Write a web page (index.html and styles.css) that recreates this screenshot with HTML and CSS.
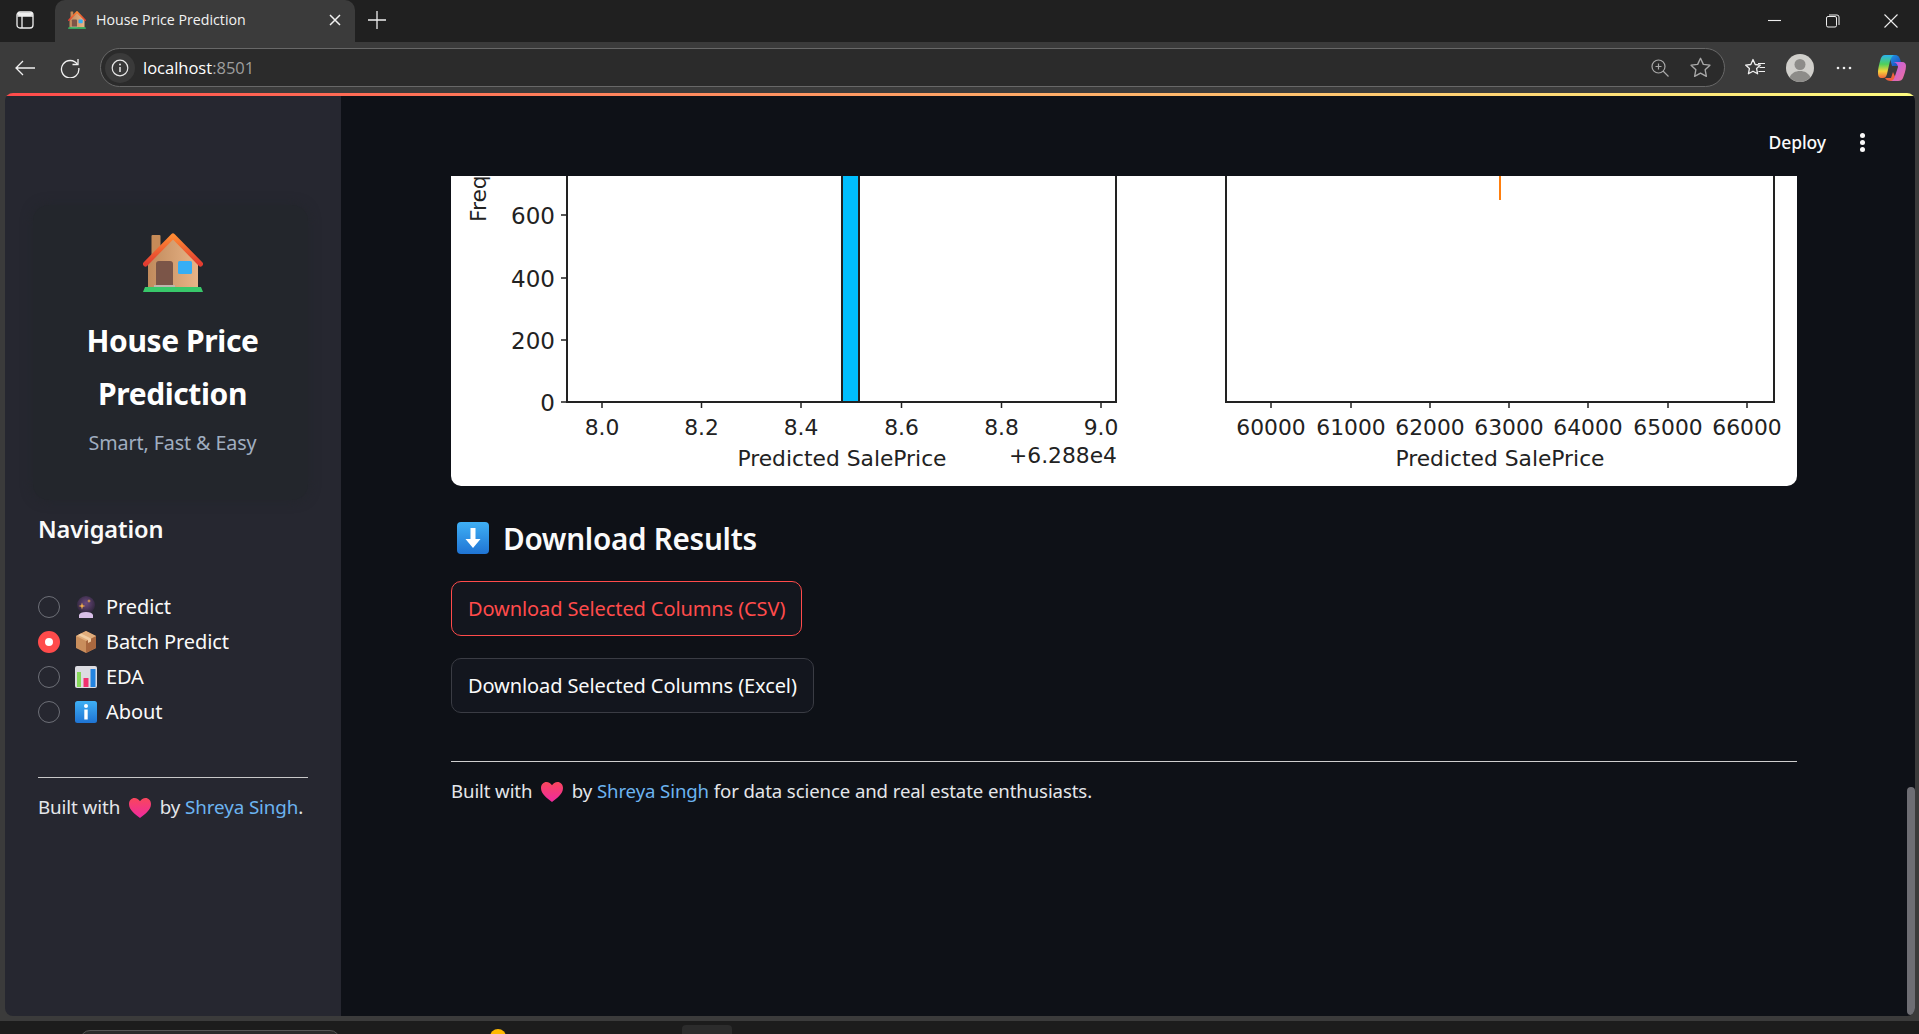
FILE: index.html
```html
<!DOCTYPE html>
<html lang="en">
<head>
<meta charset="utf-8">
<title>House Price Prediction</title>
<link rel="stylesheet" href="styles.css">
</head>
<body>
<svg class="defs" aria-hidden="true">
  <defs>
    <linearGradient id="roof" x1="0" y1="0" x2="0" y2="1"><stop offset="0" stop-color="#ff8a33"/><stop offset="1" stop-color="#e23b30"/></linearGradient>
    <linearGradient id="wall" x1="0" y1="0" x2="1" y2="0"><stop offset="0" stop-color="#c08a5c"/><stop offset="1" stop-color="#e8b487"/></linearGradient>
    <linearGradient id="blue" x1="0" y1="0" x2="0" y2="1"><stop offset="0" stop-color="#3fb0f5"/><stop offset="1" stop-color="#1f74d4"/></linearGradient>
    <linearGradient id="heart" x1="0" y1="0" x2="0" y2="1"><stop offset="0" stop-color="#f8465c"/><stop offset="1" stop-color="#f02aa0"/></linearGradient>
    <radialGradient id="ball" cx=".5" cy=".4" r=".6"><stop offset="0" stop-color="#6b4a80"/><stop offset="1" stop-color="#2d2438"/></radialGradient>
    <linearGradient id="co1" x1="0" y1="0" x2="1" y2="1"><stop offset="0" stop-color="#1f9be8"/><stop offset="1" stop-color="#1c3fb8"/></linearGradient>
    <linearGradient id="co2" x1="0" y1="0" x2="0" y2="1"><stop offset="0" stop-color="#2bb3ee"/><stop offset=".4" stop-color="#4fd05a"/><stop offset=".7" stop-color="#f6d43a"/><stop offset="1" stop-color="#f2673a"/></linearGradient>
    <linearGradient id="co3" x1="0" y1="0" x2="1" y2="1"><stop offset="0" stop-color="#b85cf0"/><stop offset="1" stop-color="#f0709a"/></linearGradient>
    <symbol id="house" viewBox="0 0 60 60">
      <rect x="8.500" y="2" width="9" height="22" rx="1" fill="#c68b58"/>
      <path d="M5 29 30 5l25 24v25H5z" fill="url(#wall)"/>
      <path d="M13 53V31q0-3 3-3h11q3 0 3 3v22z" fill="#7b5548"/>
      <rect x="35" y="28" width="14" height="13" rx="1.500" fill="#35aef5"/>
      <rect x="11" y="52" width="21" height="3" fill="#bdb5ad"/>
      <path d="M2.500 31 30 3l27.500 28" fill="none" stroke="url(#roof)" stroke-width="5" stroke-linecap="round" stroke-linejoin="round"/>
      <path d="M2 54h56l2 5H0z" fill="#38c86a"/>
    </symbol>
    <symbol id="heart-e" viewBox="0 0 22 20">
      <path d="M11 20C6 16 0 12 0 6c0-3.500 2.500-6 5.500-6C7.800 0 9.800 1.300 11 3.300 12.200 1.300 14.200 0 16.500 0 19.500 0 22 2.500 22 6c0 6-6 10-11 14z" fill="url(#heart)"/>
    </symbol>
  </defs>
</svg>

<div class="tabstrip">
  <svg class="i-panel" viewBox="0 0 18 18"><rect x="1" y="1" width="16" height="16" rx="3" fill="none" stroke="#f0f0f0" stroke-width="1.300"/><path d="M1.500 5h15.500M6 5v12" fill="none" stroke="#f0f0f0" stroke-width="1.300"/><rect x="1.500" y="1.500" width="15" height="3.500" rx="2" fill="#f0f0f0"/></svg>
  <div class="tab">
    <svg class="tab-icon"><use href="#house"/></svg>
    <span class="tab-title">House Price Prediction</span>
    <svg class="tab-close" viewBox="0 0 12 12"><path d="M1 1l10 10M11 1 1 11" stroke="#f2f2f2" stroke-width="1.500"/></svg>
  </div>
  <svg class="i-plus" viewBox="0 0 18 18"><path d="M9 0v18M0 9h18" stroke="#eee" stroke-width="1.300"/></svg>
  <div class="window-controls">
    <svg class="i-win" viewBox="0 0 14 14"><path d="M0 6.500h13" stroke="#eee" stroke-width="1.100"/></svg>
    <svg class="i-win" viewBox="0 0 14 14"><rect x=".5" y="2.500" width="10" height="10.500" rx="1.500" fill="none" stroke="#eee"/><path d="M3 1h8q2 0 2 2v8" fill="none" stroke="#eee"/></svg>
    <svg class="i-win" viewBox="0 0 14 14"><path d="M.5.500l13 13M13.500.500l-13 13" stroke="#eee" stroke-width="1.100"/></svg>
  </div>
</div>

<div class="toolbar">
  <svg class="i-back" viewBox="0 0 20 16"><path d="M20 8H1M8 1 1 8l7 7" fill="none" stroke="#f0f0f0" stroke-width="1.300"/></svg>
  <svg class="i-reload" viewBox="0 0 20 20"><path d="M17.500 6.500A8.700 8.700 0 1 0 18.800 10" fill="none" stroke="#f0f0f0" stroke-width="1.300"/><path d="M18 1v5.500h-5.500" fill="none" stroke="#f0f0f0" stroke-width="1.300"/></svg>
  <div class="address">
    <span class="chip"><svg class="i-info" viewBox="0 0 18 18"><circle cx="9" cy="9" r="7.800" fill="none" stroke="#e8e8e8" stroke-width="1.200"/><path d="M9 8v5" stroke="#e8e8e8" stroke-width="1.500"/><circle cx="9" cy="5.500" r="1" fill="#e8e8e8"/></svg></span>
    <span class="url">localhost<span class="url-port">:8501</span></span>
    <svg class="i-zoom" viewBox="0 0 18 18"><circle cx="7.500" cy="7.500" r="6.500" fill="none" stroke="#a8a8a8" stroke-width="1.200"/><path d="M12 12l5.500 5.500M4.500 7.500h6M7.500 4.500v6" stroke="#a8a8a8" stroke-width="1.200"/></svg>
    <svg class="i-star" viewBox="0 0 20 20"><path d="M10 1.200l2.700 5.800 6.300.8-4.600 4.300 1.200 6.300-5.600-3.100-5.600 3.100 1.200-6.300L1 7.800l6.300-.8z" fill="none" stroke="#a8a8a8" stroke-width="1.300" stroke-linejoin="round"/></svg>
  </div>
  <svg class="i-favs" viewBox="0 0 20 20"><path d="M8 1.500l2.200 5 5.200.6-3.800 3.500 1 5.200L8 13.200l-4.600 2.600 1-5.200L.6 7.100l5.200-.6z" fill="none" stroke="#f0f0f0" stroke-width="1.300" stroke-linejoin="round"/><path d="M13 5.500h7M14.500 9.500h5.500M13.500 13.500h6.500" stroke="#f0f0f0" stroke-width="1.200"/></svg>
  <svg class="i-avatar" viewBox="0 0 28 28"><circle cx="14" cy="14" r="14" fill="#d0cfcb"/><circle cx="14" cy="10.500" r="5.500" fill="#8d8c89"/><path d="M3.600 23.300C5.500 19 9.500 17 14 17s8.500 2 10.400 6.300A14 14 0 0 1 3.600 23.300z" fill="#8d8c89"/></svg>
  <svg class="i-more" viewBox="0 0 16 4"><circle cx="2" cy="2" r="1.300" fill="#eee"/><circle cx="8" cy="2" r="1.300" fill="#eee"/><circle cx="14" cy="2" r="1.300" fill="#eee"/></svg>
  <svg class="i-copilot" viewBox="0 0 28 28"><path d="M11 1h6c3 0 4 2 5 4l2 7h-10z" fill="url(#co1)"/><path d="M7 1h9c-2 1-3 3-4 6L9 20c-1 3-2 4-4 4H4c-3 0-4-2-4-5 0-5 2-12 3-15 1-2 2-3 4-3z" fill="url(#co2)"/><path d="M7 24h6l2-6 4 9h-6c-3 0-5-1-6-3z" fill="#f0603c"/><path d="M15 8h9c3 0 4 2 4 4 0 4-2 9-3 12-1 2-2 3-5 3h-8c3 0 4-2 5-5l3-9c0-2-2-5-5-5z" fill="url(#co3)"/></svg>
</div>

<div class="viewport">
  <div class="progress"></div>
  <div class="app">
    <aside class="sidebar">
      <div class="brand">
        <svg class="brand-icon"><use href="#house"/></svg>
        <h1 class="brand-title">House Price Prediction</h1>
        <p class="brand-sub">Smart, Fast &amp; Easy</p>
      </div>
      <h2 class="nav-title">Navigation</h2>
      <ul class="nav">
        <li class="nav-item"><span class="radio"></span>
          <svg class="emoji" viewBox="0 0 22 22"><circle cx="11" cy="9" r="9" fill="url(#ball)"/><path d="M4 19q1-3 7-3t7 3v3H4z" fill="#d9bfe8"/><path d="M7 6.500l.8 2.700 2.700.8-2.700.8L7 13.500l-.8-2.700L3.500 10l2.700-.8zM14 3l.5 1.500L16 5l-1.500.5L14 7l-.5-1.500L12 5l1.500-.5z" fill="#f7b14a"/></svg>
          <span>Predict</span></li>
        <li class="nav-item"><span class="radio radio-on"></span>
          <svg class="emoji" viewBox="0 0 22 22"><path d="M11 0l10 5v12l-10 5-10-5V5z" fill="#c98e5c"/><path d="M11 10 21 5v12l-10 5z" fill="#a9683f"/><path d="M1 5l10-5 10 5-10 5z" fill="#e0ad7c"/><path d="M6 2.500l10 5v3l-3 1.500v-3L3 4z" fill="#f0cda4"/></svg>
          <span>Batch Predict</span></li>
        <li class="nav-item"><span class="radio"></span>
          <svg class="emoji" viewBox="0 0 22 22"><rect width="22" height="22" rx="2" fill="#dcdce2"/><rect x="2" y="6" width="4" height="15" fill="#86d85a"/><rect x="8.500" y="12" width="5" height="9" fill="#f0306e"/><rect x="15.500" y="3" width="5" height="18" fill="#2484e0"/></svg>
          <span>EDA</span></li>
        <li class="nav-item"><span class="radio"></span>
          <svg class="emoji" viewBox="0 0 22 22"><rect width="22" height="22" rx="2.500" fill="url(#blue)"/><circle cx="11" cy="5" r="2" fill="#fff"/><rect x="9.300" y="8.500" width="3.400" height="10" fill="#fff"/></svg>
          <span>About</span></li>
      </ul>
      <hr class="side-rule">
      <p class="credit">Built with <svg class="heart"><use href="#heart-e"/></svg> by <a class="link" href="#">Shreya Singh</a>.</p>
    </aside>

    <main class="main">
      <header class="main-header">
        <span class="deploy">Deploy</span>
        <svg class="kebab" viewBox="0 0 7 21"><circle cx="3.500" cy="3.500" r="2.500" fill="#fafafa"/><circle cx="3.500" cy="10.500" r="2.500" fill="#fafafa"/><circle cx="3.500" cy="17.500" r="2.500" fill="#fafafa"/></svg>
      </header>
      <div class="content">
        <div class="chart-card">
          <svg class="chart" width="1346" height="310" viewBox="0 0 1346 310">
            <text class="ct" transform="translate(35 46) rotate(-90)" text-anchor="start">Frequency</text>
            <rect x="391" y="-20" width="17" height="246" fill="#00bfff" stroke="#222" stroke-width="2"/>
            <path class="ax" d="M116-10V226H665V-10"/>
            <path class="tk" d="M110 39h6M110 102h6M110 164h6M110 226h6M151 226v6M250.500 226v6M350 226v6M450.500 226v6M550.500 226v6M650 226v6"/>
            <text class="ct ct-y" x="104" y="48" text-anchor="end">600</text>
            <text class="ct ct-y" x="104" y="111" text-anchor="end">400</text>
            <text class="ct ct-y" x="104" y="173" text-anchor="end">200</text>
            <text class="ct ct-y" x="104" y="235" text-anchor="end">0</text>
            <text class="ct" x="151" y="259" text-anchor="middle">8.0</text>
            <text class="ct" x="250.500" y="259" text-anchor="middle">8.2</text>
            <text class="ct" x="350" y="259" text-anchor="middle">8.4</text>
            <text class="ct" x="450.500" y="259" text-anchor="middle">8.6</text>
            <text class="ct" x="550.500" y="259" text-anchor="middle">8.8</text>
            <text class="ct" x="650" y="259" text-anchor="middle">9.0</text>
            <text class="ct" x="391" y="290" text-anchor="middle">Predicted SalePrice</text>
            <text class="ct" x="666" y="287" text-anchor="end">+6.288e4</text>
            <path class="ax" d="M775-10V226H1323V-10"/>
            <path class="orange" d="M1049 0v24"/>
            <path class="tk" d="M820 226v6M900 226v6M979 226v6M1058 226v6M1137 226v6M1217 226v6M1296 226v6"/>
            <text class="ct" x="820" y="259" text-anchor="middle">60000</text>
            <text class="ct" x="900" y="259" text-anchor="middle">61000</text>
            <text class="ct" x="979" y="259" text-anchor="middle">62000</text>
            <text class="ct" x="1058" y="259" text-anchor="middle">63000</text>
            <text class="ct" x="1137" y="259" text-anchor="middle">64000</text>
            <text class="ct" x="1217" y="259" text-anchor="middle">65000</text>
            <text class="ct" x="1296" y="259" text-anchor="middle">66000</text>
            <text class="ct" x="1049" y="290" text-anchor="middle">Predicted SalePrice</text>
          </svg>
        </div>
        <h3 class="section-title">
          <svg class="section-emoji" viewBox="0 0 32 32"><rect width="32" height="32" rx="4" fill="url(#blue)"/><path d="M13.500 6h5v11h5L16 26 8.500 17h5z" fill="#fff"/></svg>
          <span>Download Results</span>
        </h3>
        <button class="btn btn-active" type="button">Download Selected Columns (CSV)</button>
        <button class="btn" type="button">Download Selected Columns (Excel)</button>
        <hr class="main-rule">
        <p class="footer-text">Built with <svg class="heart"><use href="#heart-e"/></svg> by <a class="link" href="#">Shreya Singh</a> for data science and real estate enthusiasts.</p>
      </div>
      <div class="scroll-thumb"></div>
    </main>
  </div>
</div>

<div class="taskbar">
  <span class="tb-pill"></span>
  <span class="tb-sun"></span>
  <span class="tb-box"></span>
</div>
</body>
</html>
```
FILE: styles.css
```css
* { box-sizing: border-box; }
html, body { margin: 0; height: 100%; overflow: hidden; }
body { background: #3b3b3b; font-family: "Noto Sans", sans-serif; color: #fafafa; display: flex; flex-direction: column; width: 1919px; height: 1034px; }
.defs { width: 0; height: 0; display: block; flex: none; }
svg { display: block; flex: none; }

/* browser chrome */
.tabstrip { height: 42px; flex: none; background: #202020; display: flex; align-items: center; padding-left: 16px; }
.i-panel { width: 18px; height: 18px; margin-right: 21px; margin-bottom: 2px; }
.tab { width: 300px; height: 42px; background: #3b3b3b; border-radius: 10px 10px 0 0; display: flex; align-items: center; padding: 0 0 2px 13px; }
.tab-icon { width: 18px; height: 18px; margin-right: 10px; }
.tab-title { font-family: "Open Sans", sans-serif; font-size: 14.200px; color: #f2f2f2; flex: 1; white-space: nowrap; margin-bottom: 2px; }
.tab-close { width: 12px; height: 12px; margin-right: 14px; }
.i-plus { width: 18px; height: 18px; margin: 0 0 2px 13px; }
.window-controls { margin-left: auto; display: flex; gap: 44px; padding: 0 21px 1px 0; }
.i-win { width: 14px; height: 14px; }

.toolbar { height: 51px; flex: none; background: #3b3b3b; display: flex; align-items: center; padding-left: 15px; }
.i-back { width: 20px; height: 16px; margin-right: 25px; }
.i-reload { width: 20px; height: 20px; margin-right: 20px; }
.address { width: 1625px; height: 39px; border: 1px solid #686868; border-radius: 20px; background: #2b2b2b; display: flex; align-items: center; padding-left: 4px; padding-right: 13px; }
.chip { width: 30px; height: 30px; border-radius: 50%; background: #3a3a3a; display: flex; align-items: center; justify-content: center; margin-right: 8px; }
.i-info { width: 18px; height: 18px; }
.url { font-family: "Open Sans", sans-serif; font-size: 16.500px; color: #fff; }
.url-port { color: #9e9e9e; }
.i-zoom { width: 18px; height: 18px; margin-left: auto; margin-right: 21px; }
.i-star { width: 21px; height: 21px; }
.i-favs { width: 20px; height: 20px; margin-left: 20px; }
.i-avatar { width: 28px; height: 28px; margin-left: 21px; }
.i-more { width: 16px; height: 4px; margin-left: 22px; }
.i-copilot { width: 28px; height: 28px; margin-left: 26px; }

/* page */
.viewport { flex: none; height: 923px; width: 1910px; margin-left: 5px; display: flex; flex-direction: column; border-radius: 8px; overflow: hidden; }
.progress { height: 3px; flex: none; background: linear-gradient(90deg, #ff4b4b, #fffd80); }
.app { flex: 1; display: flex; min-height: 0; }
.sidebar { width: 336px; flex: none; background: #262730; padding: 109px 33px 0 28px; }
.brand { height: 295px; background: #23262c; border-radius: 16px; display: flex; flex-direction: column; align-items: center; padding: 28px 0 0 4px; box-shadow: 0 0 12px #23262c; }
.brand-icon { width: 60px; height: 60px; }
.brand-title { font-size: 30px; line-height: 53px; font-weight: 700; margin: 21px 0 0; width: 190px; text-align: center; color: #fff; letter-spacing: -.4px; }
.brand-sub { font-size: 19.700px; line-height: 26px; margin: 10px 0 0; color: #a0aec0; letter-spacing: -.1px; white-space: nowrap; }
.nav-title { font-size: 23.600px; font-weight: 600; margin: 12px 0 0 5px; line-height: 34px; letter-spacing: -.1px; }
.nav { list-style: none; margin: 43px 0 0 5px; padding: 0; }
.nav-item { height: 35px; display: flex; align-items: center; font-size: 20px; letter-spacing: -.1px; }
.radio { width: 22px; height: 22px; border-radius: 50%; border: 1.500px solid #6d6f77; margin-right: 15px; flex: none; }
.radio-on { background: #fff; border: 7px solid #ff4b4b; }
.emoji { width: 22px; height: 22px; margin-right: 9px; }
.side-rule { border: 0; border-top: 1px solid #c8c8c8; margin: 48px 0 0 5px; }
.credit { font-size: 18.800px; line-height: 26px; margin: 16px 0 0 5px; color: #e4e6ea; white-space: nowrap; letter-spacing: -.1px; }
.heart { display: inline-block; width: 22px; height: 20px; vertical-align: -4px; margin: 0 4px; }
.link { color: #6cb4f0; text-decoration: none; }

.main { flex: 1; background: #0e1117; padding: 0 118px 0 110px; display: flex; flex-direction: column; position: relative; min-width: 0; }
.main-header { height: 80px; flex: none; display: flex; align-items: center; justify-content: flex-end; margin-right: -69px; padding-top: 12px; }
.deploy { font-size: 17.500px; font-weight: 500; margin-right: 33px; letter-spacing: -.1px; }
.kebab { width: 7px; height: 21px; }
.content { flex: 1; min-height: 0; overflow: hidden; }
.chart-card { background: #fff; border-radius: 0 0 10px 10px; height: 310px; overflow: hidden; }
.ct { font-family: "DejaVu Sans", sans-serif; font-size: 21.800px; fill: #222; }
.ct-y { font-size: 23px; }
.ax { fill: none; stroke: #222; stroke-width: 2; }
.tk { fill: none; stroke: #222; stroke-width: 1.500; }
.orange { stroke: #ff7f0e; stroke-width: 2; fill: none; }
.section-title { display: flex; align-items: center; margin: 36px 0 0 6px; height: 32px; font-size: 29.700px; font-weight: 600; color: #fafafa; letter-spacing: -.3px; }
.section-emoji { width: 32px; height: 32px; margin-right: 14px; }
.btn { display: block; height: 55px; padding: 0 16px; border: 1px solid #3a3c44; border-radius: 10px; background: #13161e; color: #fafafa; font-family: inherit; font-size: 20px; letter-spacing: -.1px; margin: 22px 0 0; }
.section-title + .btn { margin-top: 27px; }
.btn-active { border-color: #ff4b4b; color: #ff4b4b; }
.main-rule { border: 0; border-top: 1px solid #cfcfcf; margin: 48px 0 0; }
.footer-text { font-size: 18.600px; line-height: 26px; margin: 16px 0 0; color: #e4e6ea; letter-spacing: -.1px; white-space: nowrap; }
.scroll-thumb { position: absolute; right: 0; bottom: 1px; width: 8px; height: 228px; background: #6e6e74; border-radius: 4px; }

.taskbar { flex: 1; margin-top: 5px; background: #1c1c1c; display: flex; align-items: flex-start; min-height: 0; overflow: hidden; }
.tb-pill { width: 260px; height: 20px; margin: 9px 0 0 80px; border: 1px solid #555; border-radius: 12px; background: #2a2a2a; }
.tb-sun { width: 16px; height: 16px; margin: 8px 0 0 150px; background: #ffb900; border-radius: 50%; }
.tb-box { width: 50px; height: 20px; margin: 4px 0 0 176px; background: #2c2c2c; border-radius: 4px; }
```
